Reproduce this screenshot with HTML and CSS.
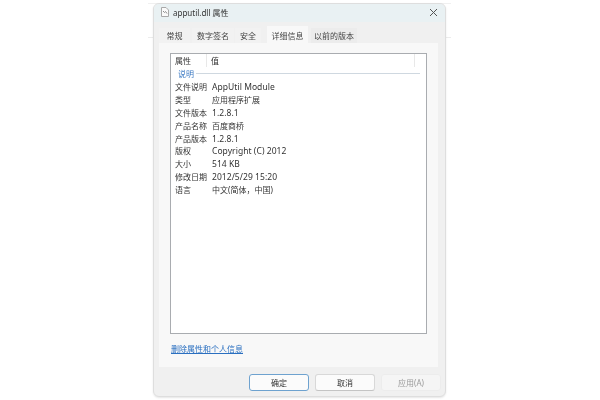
FILE: index.html
```html
<!DOCTYPE html>
<html lang="zh">
<head>
<meta charset="utf-8">
<title>apputil.dll 属性</title>
<link rel="stylesheet" href="styles.css">
</head>
<body>
<div class="backdrop"></div>
<div class="window">
  <div class="titlebar">
    <div class="title-left">
      <svg class="file-icon" width="8" height="10" viewBox="0 0 8 10"><path d="M.5.5h4.5l2.5 2.5v6.5h-7z" fill="#fafafa" stroke="#a8a8a8"/><path d="M2 4l1.500 1.500 1-1 1.500 2" fill="none" stroke="#8a8a8a"/></svg>
      <span class="title"><span class="title-latin">apputil.dll</span> 属性</span>
    </div>
    <svg class="close" width="9" height="9" viewBox="0 0 9 9"><path d="M1 1l7 7M8 1L1 8" stroke="#555" stroke-width="1"/></svg>
  </div>
  <div class="tabs">
    <div class="tab t1">常规</div>
    <div class="tab t2">数字签名</div>
    <div class="tab t3">安全</div>
    <div class="tab active">详细信息</div>
    <div class="tab t5">以前的版本</div>
  </div>
  <div class="panel">
    <div class="list">
      <div class="list-head"><span class="key">属性</span><span class="head-val">值</span><span class="divider"></span></div>
      <div class="group"><span class="group-name">说明</span><span class="group-line"></span></div>
      <div class="row"><span class="key">文件说明</span><span class="latin">AppUtil Module</span></div>
      <div class="row"><span class="key">类型</span><span>应用程序扩展</span></div>
      <div class="row"><span class="key">文件版本</span><span class="latin">1.2.8.1</span></div>
      <div class="row"><span class="key">产品名称</span><span>百度商桥</span></div>
      <div class="row"><span class="key">产品版本</span><span class="latin">1.2.8.1</span></div>
      <div class="row"><span class="key">版权</span><span class="latin">Copyright (C) 2012</span></div>
      <div class="row"><span class="key">大小</span><span class="latin">514 KB</span></div>
      <div class="row"><span class="key">修改日期</span><span class="latin">2012/5/29 15:20</span></div>
      <div class="row"><span class="key">语言</span><span>中文(简体，中国)</span></div>
    </div>
    <a class="link" href="#">删除属性和个人信息</a>
  </div>
  <div class="buttons">
    <div class="btn primary">确定</div>
    <div class="btn">取消</div>
    <div class="btn disabled">应用(A)</div>
  </div>
</div>
</body>
</html>
```
FILE: styles.css
```css
* { box-sizing: border-box; }
html, body { margin: 0; height: 100%; }
body {
  background: #fff;
  display: flex;
  justify-content: flex-start;
  align-items: flex-start;
  padding: 3px 0 0 153px;
  font-family: "Noto Sans", "Noto Sans CJK SC", sans-serif;
  font-size: 8px;
  color: #333;
  overflow: hidden;
}
.backdrop {
  position: absolute;
  left: 148px;
  top: 3px;
  width: 303px;
  height: 35px;
  border-top: 1px solid #f0f0f0;
  border-bottom: 1px solid #ececec;
}
.latin { font-size: 8.5px; letter-spacing: .05px; }
.window {
  position: relative;
  width: 293px;
  height: 394px;
  background: #f0f0f0;
  border: 1px solid #dedede;
  border-radius: 6px;
  box-shadow: 0 1px 2px rgba(0,0,0,.1);
  display: flex;
  flex-direction: column;
  overflow: hidden;
  filter: blur(.5px);
}
.titlebar {
  height: 18px;
  background: #e9f1f3;
  display: flex;
  align-items: center;
  justify-content: space-between;
  padding: 0 7px 2px 7px;
  flex: none;
}
.title-left { display: flex; align-items: center; gap: 4px; }
.title { font-size: 8px; color: #333; }
.title-latin { font-size: 8px; }
.tabs {
  display: flex;
  align-items: flex-end;
  height: 21px;
  padding-left: 5px;
  flex: none;
}
.tab {
  height: 15px;
  background: #f2f2f2;
  display: flex;
  align-items: center;
  justify-content: center;
  color: #444;
  flex: none;
}
.t1 { width: 31px; margin-right: 2px; }
.t2 { width: 42px; margin-right: 1px; }
.t3 { width: 26px; margin-right: 6px; }
.active { width: 41px; height: 17px; padding-top: 2px; background: #f8f8f8; margin-right: 3px; }
.t5 { width: 46px; background: #ececec; }
.panel {
  margin: 0 7px 0 5px;
  height: 324px;
  background: #f8f8f8;
  padding: 10px 11px 0 11px;
  display: flex;
  flex-direction: column;
  flex: none;
}
.list {
  height: 281px;
  background: #fff;
  border: 1px solid #a9acb0;
  padding: 0 4px;
}
.list-head { height: 13px; display: flex; align-items: center; }
.key { width: 37px; flex: none; }
.head-val { flex: 1; }
.list-head .key { border-right: 1px solid #e8e8e8; height: 13px; line-height: 13px; margin-right: 4px; width: 32px; }
.divider { width: 1px; height: 13px; background: #e8e8e8; margin-right: 7px; }
.group { height: 12px; display: flex; align-items: center; color: #3a78c2; padding-left: 3px; gap: 2px; margin-right: 2px; }
.group-line { flex: 1; height: 1px; background: #cfd8e0; }
.row { height: 12.8px; display: flex; align-items: center; }
.group + .row { margin-top: 1.5px; }
.link { margin: 9px 0 0 1px; color: #2a6fc0; font-size: 8px; text-decoration: underline; align-self: flex-start; }
.buttons {
  flex: 1;
  display: flex;
  justify-content: flex-start;
  align-items: flex-start;
  gap: 6px;
  padding: 7px 0 0 95px;
}
.btn {
  width: 60px;
  height: 17px;
  border-radius: 3px;
  background: #fbfbfb;
  border: 1px solid #d8d8d8;
  border-bottom-color: #c4c4c4;
  display: flex;
  align-items: center;
  justify-content: center;
  color: #333;
  flex: none;
}
.primary { border: 1px solid #6ea2cf; }
.disabled { color: #9a9a9a; background: #f5f5f5; border-color: #ececec; }
```
